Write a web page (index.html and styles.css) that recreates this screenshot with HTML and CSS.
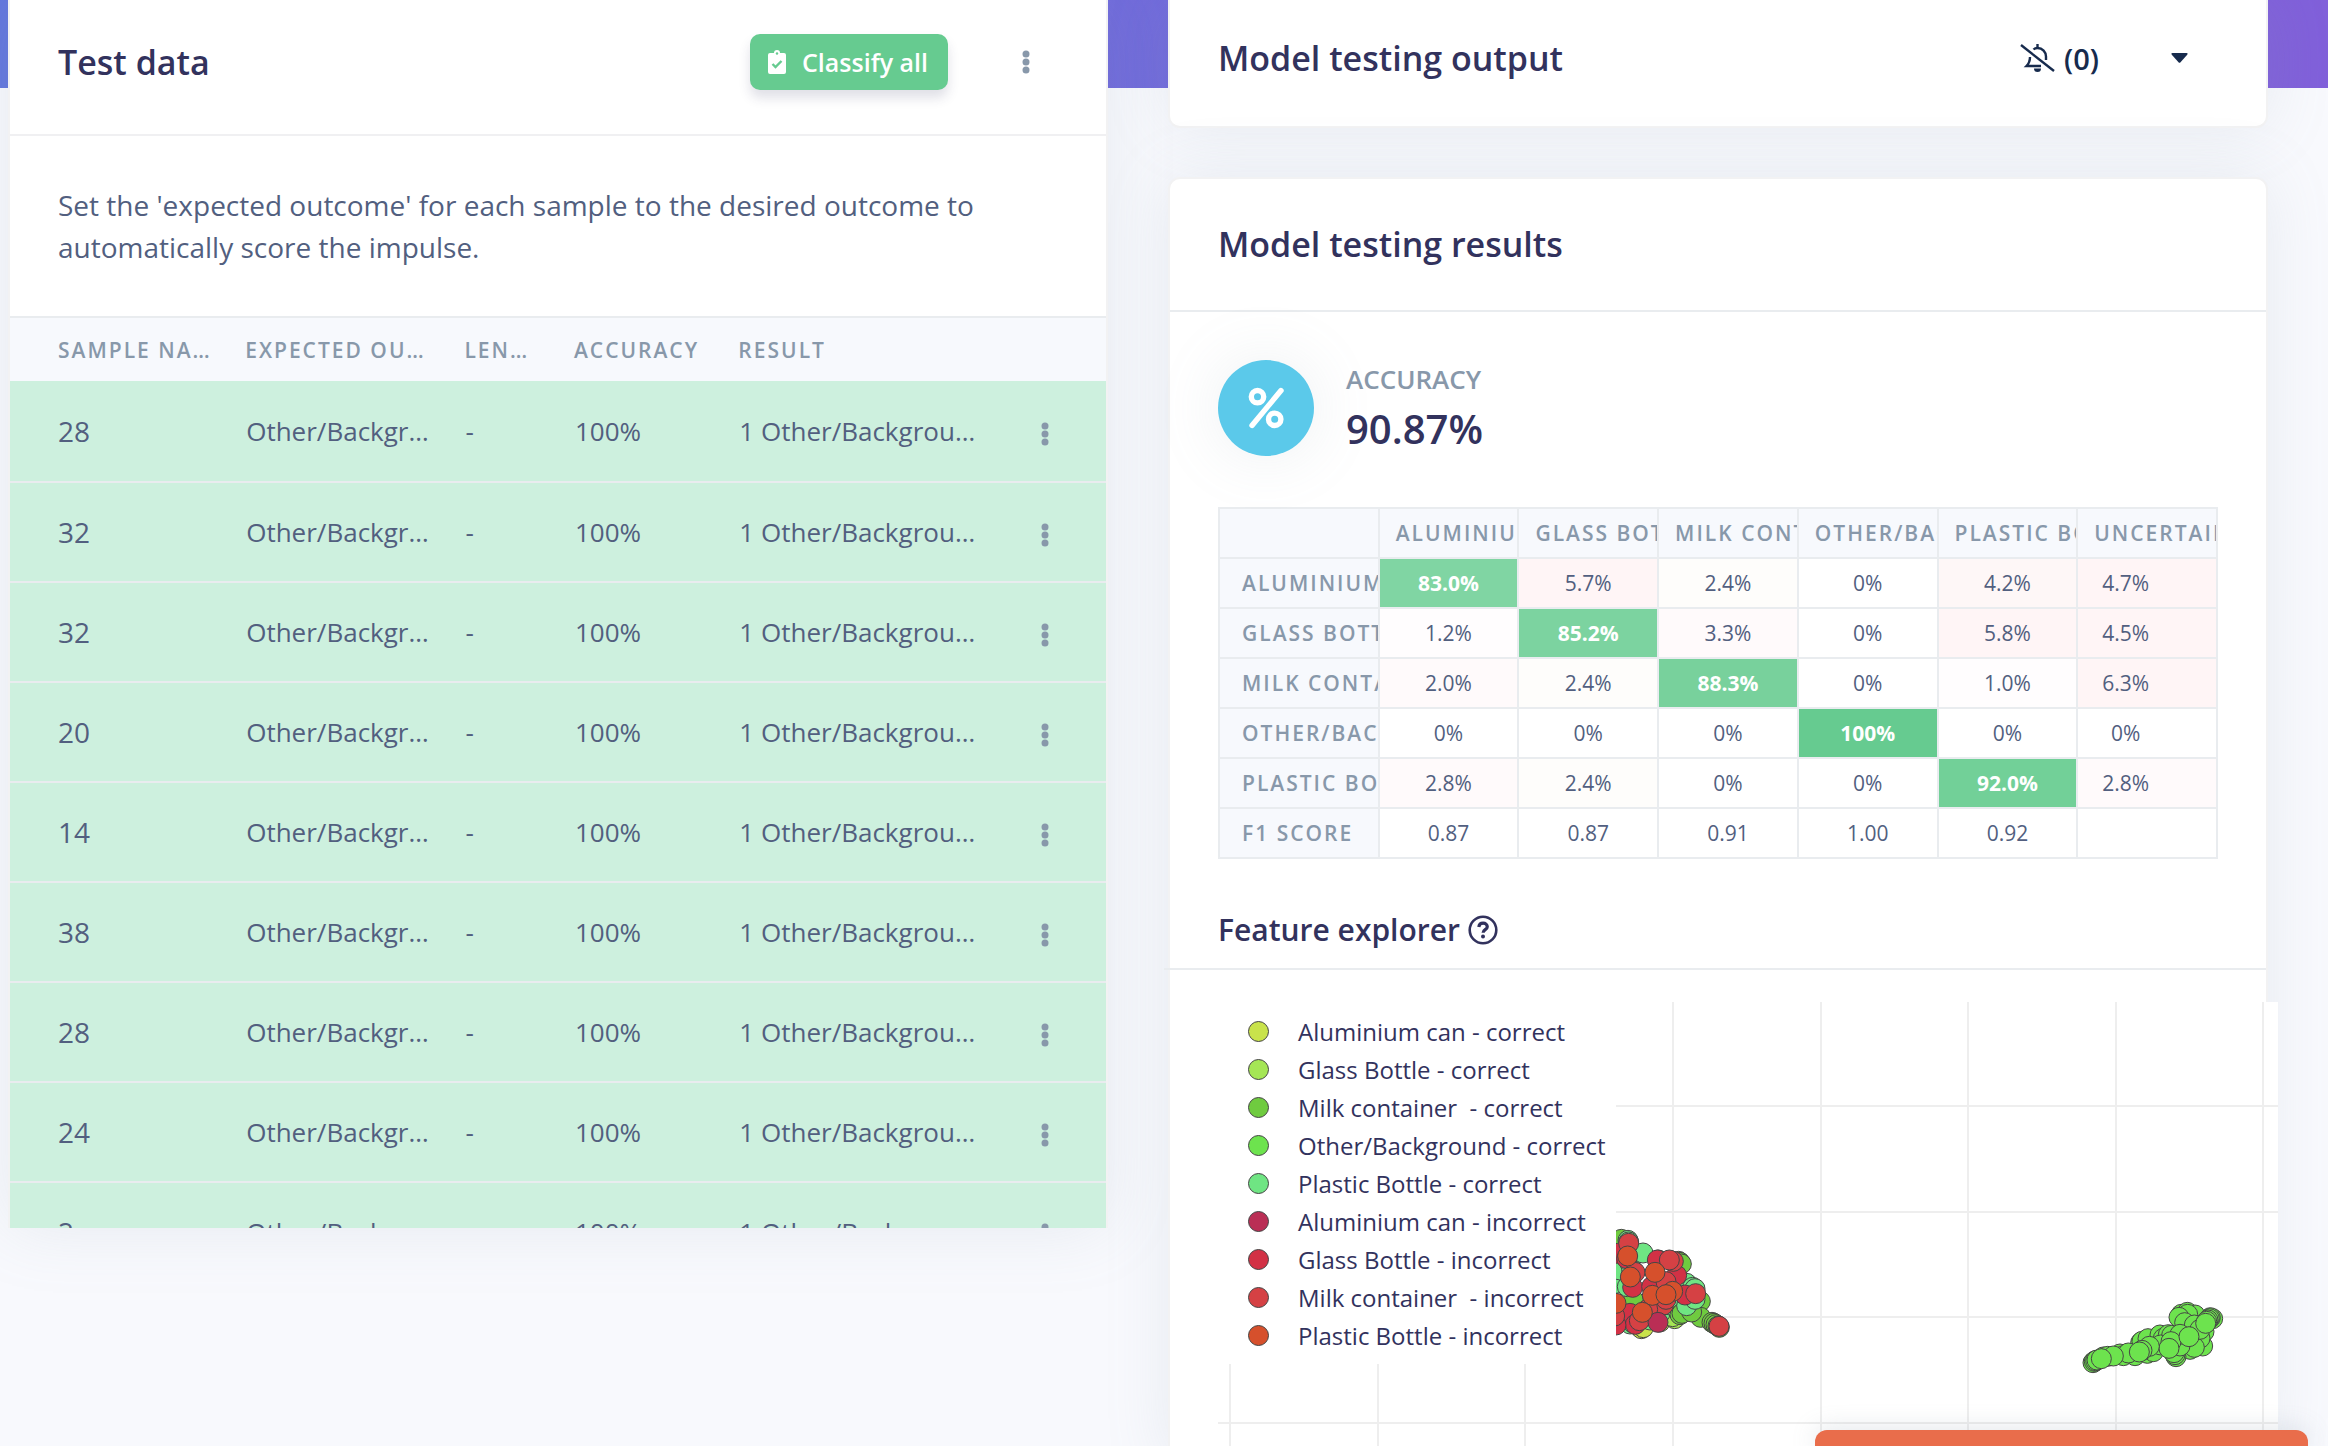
FILE: index.html
```html
<!DOCTYPE html>
<html lang="en">
<head>
<meta charset="utf-8">
<title>Model testing</title>
<link rel="stylesheet" href="styles.css">
</head>
<body>
<svg class="sprite" aria-hidden="true">
  <symbol id="dots" viewBox="0 0 8 24"><circle cx="4" cy="4" r="3.5"/><circle cx="4" cy="12" r="3.5"/><circle cx="4" cy="20" r="3.5"/></symbol>
</svg>
<main class="page">
  <section class="card card-data">
    <header class="card-header header-data">
      <h2 class="title">Test data</h2>
      <div class="actions">
        <button class="btn-classify" type="button">
          <svg class="icon-clipboard" viewBox="0 0 18 24" aria-hidden="true"><path fill="#fff" d="M2 3h4a3 3 0 0 1 6 0h4a2 2 0 0 1 2 2v17a2 2 0 0 1-2 2H2a2 2 0 0 1-2-2V5a2 2 0 0 1 2-2z"/><circle cx="9" cy="3.500" r="1.200" fill="#66cb90"/><path d="M4.500 14l3 3 6-6" fill="none" stroke="#66cb90" stroke-width="2.400"/></svg>
          Classify all
        </button>
        <button class="btn-dots" type="button" aria-label="More actions"><svg class="icon-dots"><use href="#dots"/></svg></button>
      </div>
    </header>
    <p class="intro">Set the 'expected outcome' for each sample to the desired outcome to automatically score the impulse.</p>
    <div class="table-wrap">
      <table class="samples">
        <colgroup><col class="c20"><col class="c20"><col class="c10"><col class="c15"><col class="c25"><col class="c10"></colgroup>
        <thead><tr><th>Sample name</th><th>Expected outcome</th><th>Length</th><th>Accuracy</th><th>Result</th><th></th></tr></thead>
        <tbody>
          <tr><td>28</td><td>Other/Background</td><td>-</td><td>100%</td><td>1 Other/Background</td><td><button class="btn-dots" type="button" aria-label="Sample actions"><svg class="icon-dots"><use href="#dots"/></svg></button></td></tr>
          <tr><td>32</td><td>Other/Background</td><td>-</td><td>100%</td><td>1 Other/Background</td><td><button class="btn-dots" type="button" aria-label="Sample actions"><svg class="icon-dots"><use href="#dots"/></svg></button></td></tr>
          <tr><td>32</td><td>Other/Background</td><td>-</td><td>100%</td><td>1 Other/Background</td><td><button class="btn-dots" type="button" aria-label="Sample actions"><svg class="icon-dots"><use href="#dots"/></svg></button></td></tr>
          <tr><td>20</td><td>Other/Background</td><td>-</td><td>100%</td><td>1 Other/Background</td><td><button class="btn-dots" type="button" aria-label="Sample actions"><svg class="icon-dots"><use href="#dots"/></svg></button></td></tr>
          <tr><td>14</td><td>Other/Background</td><td>-</td><td>100%</td><td>1 Other/Background</td><td><button class="btn-dots" type="button" aria-label="Sample actions"><svg class="icon-dots"><use href="#dots"/></svg></button></td></tr>
          <tr><td>38</td><td>Other/Background</td><td>-</td><td>100%</td><td>1 Other/Background</td><td><button class="btn-dots" type="button" aria-label="Sample actions"><svg class="icon-dots"><use href="#dots"/></svg></button></td></tr>
          <tr><td>28</td><td>Other/Background</td><td>-</td><td>100%</td><td>1 Other/Background</td><td><button class="btn-dots" type="button" aria-label="Sample actions"><svg class="icon-dots"><use href="#dots"/></svg></button></td></tr>
          <tr><td>24</td><td>Other/Background</td><td>-</td><td>100%</td><td>1 Other/Background</td><td><button class="btn-dots" type="button" aria-label="Sample actions"><svg class="icon-dots"><use href="#dots"/></svg></button></td></tr>
          <tr><td>2</td><td>Other/Background</td><td>-</td><td>100%</td><td>1 Other/Background</td><td><button class="btn-dots" type="button" aria-label="Sample actions"><svg class="icon-dots"><use href="#dots"/></svg></button></td></tr>
        </tbody>
      </table>
    </div>
  </section>

  <div class="column">
    <section class="card card-output">
      <header class="card-header header-output">
        <h2 class="title">Model testing output</h2>
        <div class="output-tools">
          <button class="btn-notify" type="button" aria-label="Notifications off">
            <svg class="icon-bell" viewBox="0 0 36 28" fill="none" stroke="#172b4d" stroke-width="2.400" aria-hidden="true"><path d="M1 1l33 26"/><path d="M13.500 5.500C14.500 4.500 16 4 17.500 4c5 0 8.500 4 8.500 8.500v3.500"/><path d="M17.500 0v4"/><path d="M10 13c0 4-.500 6-3.500 9H21"/><path d="M14 24.500h7a3.500 3.500 0 0 1-7 0z" fill="#172b4d" stroke="none"/></svg>
            (0)
          </button>
          <button class="btn-caret" type="button" aria-label="Expand"><svg class="icon-caret" viewBox="0 0 16 10" aria-hidden="true"><path d="M1 0h14q2 0 .500 2L9 9.300q-1 1-2 0L.500 2Q-1 0 1 0z" fill="#172b4d"/></svg></button>
        </div>
      </header>
    </section>

    <section class="card card-results">
      <header class="card-header header-results"><h2 class="title">Model testing results</h2></header>
      <div class="results">
        <div class="stat">
          <span class="stat-icon"><svg class="icon-percent" viewBox="0 0 36 42" fill="none" stroke="#fff" stroke-width="5.400" stroke-linecap="round" aria-hidden="true"><path d="M33 3.500L4 38.500"/><circle cx="9.500" cy="9.700" r="6.200"/><circle cx="26.700" cy="32.300" r="6.200"/></svg></span>
          <div class="stat-text"><span class="stat-label">ACCURACY</span><span class="stat-value">90.87%</span></div>
        </div>
        <table class="matrix">
          <colgroup><col class="m-head"><col span="6"></colgroup>
          <thead><tr><th></th><th>Aluminium can</th><th>Glass Bottle</th><th>Milk container</th><th>Other/Background</th><th>Plastic Bottle</th><th>Uncertain</th></tr></thead>
          <tbody>
            <tr><th>Aluminium can</th><td class="hit h83">83.0%</td><td class="e4">5.7%</td><td class="e1">2.4%</td><td>0%</td><td class="e3">4.2%</td><td class="e4">4.7%</td></tr>
            <tr><th>Glass Bottle</th><td class="e0">1.2%</td><td class="hit h85">85.2%</td><td class="e2">3.3%</td><td>0%</td><td class="e4">5.8%</td><td class="e4">4.5%</td></tr>
            <tr><th>Milk container</th><td class="e2">2.0%</td><td class="e1">2.4%</td><td class="hit h88">88.3%</td><td>0%</td><td class="e0">1.0%</td><td class="e4">6.3%</td></tr>
            <tr><th>Other/Background</th><td>0%</td><td>0%</td><td>0%</td><td class="hit h100">100%</td><td>0%</td><td>0%</td></tr>
            <tr><th>Plastic Bottle</th><td class="e2">2.8%</td><td class="e1">2.4%</td><td>0%</td><td>0%</td><td class="hit h92">92.0%</td><td class="e2">2.8%</td></tr>
            <tr><th>F1 score</th><td>0.87</td><td>0.87</td><td>0.91</td><td>1.00</td><td>0.92</td><td></td></tr>
          </tbody>
        </table>

        <div class="explorer-header">
          <h3 class="subtitle">Feature explorer</h3>
          <svg class="icon-help" viewBox="0 0 30 30" fill="none" stroke="#32325d" aria-hidden="true"><circle cx="15" cy="15" r="13.300" stroke-width="2.600"/><path d="M10.800 12c.3-2.500 2-3.800 4.300-3.800 2.400 0 4.200 1.400 4.200 3.500 0 3-4.200 2.900-4.200 6" stroke-width="3.200"/><circle cx="15" cy="21.500" r="2" fill="#32325d" stroke="none"/></svg>
        </div>

        <div class="plot">
          <svg class="plot-canvas" viewBox="0 0 1060 460" aria-label="Feature explorer scatter plot">
            <rect width="1060" height="460" fill="#fff"/>
            <path d="M12 0v460M160 0v460M307 0v460M455 0v460M603 0v460M750 0v460M898 0v460M1045 0v460M0 104h1060M0 210h1060M0 315h1060M0 421h1060" stroke="#eee" stroke-width="2" fill="none"/>
            <g class="pts" transform="translate(362 188) scale(.33333)">
              <g fill="#6fcb3f"><circle cx="124" cy="148" r="30"/><circle cx="235" cy="210" r="30"/><circle cx="296" cy="214" r="30"/><circle cx="300" cy="217" r="30"/><circle cx="304" cy="222" r="30"/><circle cx="160" cy="330" r="30"/><circle cx="361" cy="334" r="30"/><circle cx="362" cy="382" r="30"/><circle cx="396" cy="397" r="30"/><circle cx="402" cy="400" r="30"/><circle cx="408" cy="404" r="30"/></g>
              <g fill="#6fe583"><circle cx="108" cy="280" r="30"/><circle cx="120" cy="240" r="30"/><circle cx="150" cy="220" r="30"/><circle cx="144" cy="151" r="30"/><circle cx="146" cy="156" r="30"/><circle cx="189" cy="189" r="30"/><circle cx="155" cy="240" r="30"/><circle cx="142" cy="290" r="30"/><circle cx="250" cy="310" r="30"/><circle cx="320" cy="280" r="30"/></g>
              <g fill="#c9e34b"><circle cx="179" cy="411" r="30"/><circle cx="184" cy="416" r="30"/><circle cx="190" cy="413" r="30"/><circle cx="240" cy="396" r="30"/></g>
              <g fill="#a5e655"><circle cx="284" cy="386" r="30"/><circle cx="278" cy="380" r="30"/></g>
              <g fill="#6fe583"><circle cx="125" cy="390" r="30"/><circle cx="150" cy="402" r="30"/><circle cx="160" cy="400" r="30"/><circle cx="210" cy="390" r="30"/><circle cx="240" cy="370" r="30"/><circle cx="270" cy="345" r="30"/></g>
              <g fill="#6fcb3f"><circle cx="300" cy="374" r="30"/><circle cx="306" cy="370" r="30"/><circle cx="335" cy="366" r="30"/></g>
              <g fill="#6fe583"><circle cx="320" cy="347" r="30"/><circle cx="345" cy="328" r="30"/><circle cx="342" cy="298" r="30"/><circle cx="338" cy="292" r="30"/><circle cx="345" cy="296" r="30"/></g>
              <g fill="#d23145"><circle cx="112" cy="190" r="30"/><circle cx="140" cy="206" r="30"/><circle cx="158" cy="292" r="30"/><circle cx="232" cy="210" r="30"/><circle cx="215" cy="290" r="30"/><circle cx="290" cy="256" r="30"/><circle cx="315" cy="315" r="30"/><circle cx="150" cy="370" r="30"/><circle cx="166" cy="403" r="30"/><circle cx="108" cy="405" r="30"/><circle cx="240" cy="340" r="30"/></g>
              <g fill="#d54144"><circle cx="146" cy="160" r="30"/><circle cx="165" cy="247" r="30"/><circle cx="280" cy="214" r="30"/><circle cx="268" cy="210" r="30"/><circle cx="258" cy="275" r="30"/><circle cx="250" cy="345" r="30"/><circle cx="258" cy="328" r="30"/><circle cx="203" cy="358" r="30"/><circle cx="178" cy="392" r="30"/><circle cx="104" cy="378" r="30"/><circle cx="347" cy="311" r="30"/></g>
              <circle cx="234" cy="397" r="30" fill="#ba2e55"/>
              <g fill="#d6502c"><circle cx="143" cy="198" r="30"/><circle cx="151" cy="261" r="30"/><circle cx="225" cy="247" r="30"/><circle cx="217" cy="316" r="30"/><circle cx="278" cy="304" r="30"/><circle cx="258" cy="314" r="30"/><circle cx="108" cy="340" r="30"/><circle cx="187" cy="367" r="30"/></g>
              <g fill="#6fcb3f"><circle cx="414" cy="408" r="30"/><circle cx="418" cy="412" r="30"/></g>
              <circle cx="417" cy="409" r="30" fill="#d54144"/>
            </g>
            <g class="pts" fill="#6de34e" transform="translate(822 268) scale(.33333)">
              <circle cx="159" cy="278" r="30"/><circle cx="163" cy="274" r="30"/><circle cx="167" cy="272" r="30"/><circle cx="171" cy="270" r="30"/><circle cx="190" cy="261" r="30"/><circle cx="203" cy="259" r="30"/><circle cx="240" cy="252" r="30"/><circle cx="250" cy="257" r="30"/><circle cx="285" cy="257" r="30"/><circle cx="302" cy="218" r="30"/><circle cx="306" cy="214" r="30"/><circle cx="322" cy="250" r="30"/><circle cx="324" cy="206" r="30"/><circle cx="360" cy="195" r="30"/><circle cx="370" cy="205" r="30"/><circle cx="340" cy="245" r="30"/><circle cx="385" cy="194" r="30"/><circle cx="395" cy="196" r="30"/>
              <circle cx="424" cy="133" r="30"/><circle cx="442" cy="127" r="30"/><circle cx="465" cy="135" r="30"/><circle cx="443" cy="133" r="30"/><circle cx="417" cy="142" r="30"/><circle cx="434" cy="158" r="30"/><circle cx="463" cy="165" r="30"/><circle cx="492" cy="185" r="30"/><circle cx="488" cy="228" r="30"/><circle cx="480" cy="205" r="30"/><circle cx="450" cy="238" r="30"/><circle cx="463" cy="232" r="30"/><circle cx="408" cy="260" r="30"/><circle cx="405" cy="254" r="30"/><circle cx="402" cy="248" r="30"/><circle cx="480" cy="178" r="30"/>
              <circle cx="518" cy="146" r="30"/><circle cx="511" cy="143" r="30"/><circle cx="508" cy="146" r="30"/><circle cx="504" cy="150" r="30"/><circle cx="500" cy="154" r="30"/><circle cx="497" cy="160" r="30"/><circle cx="420" cy="228" r="30"/><circle cx="420" cy="193" r="30"/><circle cx="362" cy="225" r="30"/><circle cx="393" cy="215" r="30"/><circle cx="387" cy="235" r="30"/><circle cx="447" cy="200" r="30"/><circle cx="328" cy="229" r="30"/><circle cx="265" cy="249" r="30"/><circle cx="306" cy="241" r="30"/><circle cx="298" cy="246" r="30"/><circle cx="220" cy="258" r="30"/><circle cx="184" cy="266" r="30"/>
            </g>
          </svg>
          <ul class="legend">
            <li><span class="dot d1"></span>Aluminium can - correct</li>
            <li><span class="dot d2"></span>Glass Bottle - correct</li>
            <li><span class="dot d3"></span>Milk container  - correct</li>
            <li><span class="dot d4"></span>Other/Background - correct</li>
            <li><span class="dot d5"></span>Plastic Bottle - correct</li>
            <li><span class="dot d6"></span>Aluminium can - incorrect</li>
            <li><span class="dot d7"></span>Glass Bottle - incorrect</li>
            <li><span class="dot d8"></span>Milk container  - incorrect</li>
            <li><span class="dot d9"></span>Plastic Bottle - incorrect</li>
          </ul>
        </div>
      </div>
    </section>
  </div>
</main>
<div class="toast" role="status"></div>
</body>
</html>
```
FILE: styles.css
```css
* { box-sizing: border-box; }

body {
  margin: 0;
  background: #f8f9fd;
  color: #525f7f;
  font-family: "Open Sans", "Noto Sans", sans-serif;
  font-size: 26px;
}

h2, h3, p, ul { margin: 0; padding: 0; }

button {
  font: inherit;
  border: 0;
  padding: 0;
  background: none;
  cursor: pointer;
}

.sprite { position: absolute; width: 0; height: 0; }

.page {
  display: grid;
  grid-template-columns: minmax(0, 1fr) minmax(0, 1fr);
  gap: 60px;
  align-items: start;
  height: 100vh;
  overflow: hidden;
  padding: 0 60px 0 8px;
  background: linear-gradient(87deg, #6276dd, #8160da) 0 0 / 100% 88px no-repeat;
}

.column {
  display: flex;
  flex-direction: column;
  gap: 49px;
}

.card {
  background: #fff;
  border: 2px solid #f2f2f3;
  border-radius: 12px;
  box-shadow: 0 0 64px rgba(136, 152, 170, .15);
}

.card-data {
  border-top: 0;
  border-bottom: 0;
  border-radius: 0;
}

.card-output {
  border-top: 0;
  border-radius: 0 0 12px 12px;
}

.card-header {
  display: flex;
  align-items: center;
  justify-content: space-between;
}

.header-data {
  padding: 34px 48px 44px;
  border-bottom: 2px solid #f0f0f2;
}

.header-output { padding: 33px 48px 43px; }

.header-results {
  padding: 40px 48px 41px;
  border-bottom: 2px solid #e9ecef;
}

.title {
  color: #32325d;
  font-size: 34px;
  font-weight: 600;
  line-height: 50px;
}

.actions {
  display: flex;
  align-items: center;
  gap: 65px;
  padding-right: 19px;
}

.btn-classify {
  display: flex;
  align-items: center;
  gap: 16px;
  height: 56px;
  padding: 0 20px 0 18px;
  border-radius: 10px;
  background: #66cb90;
  color: #fff;
  font-size: 25px;
  font-weight: 600;
  box-shadow: 0 8px 12px rgba(50, 50, 93, .15);
}

.icon-clipboard { width: 18px; height: 24px; }

.btn-dots {
  display: inline-flex;
  justify-content: center;
  align-items: center;
  width: 26px;
  height: 32px;
  vertical-align: middle;
}

.icon-dots {
  width: 8px;
  height: 24px;
  fill: #8898aa;
}

.intro {
  padding: 48px;
  font-size: 28px;
  line-height: 42px;
}

.table-wrap {
  max-height: 912px;
  overflow: hidden;
}

table { border-collapse: collapse; table-layout: fixed; width: 100%; }

.samples { border-collapse: separate; border-spacing: 0; }
.c10 { width: 10%; }
.c15 { width: 15%; }
.c20 { width: 20%; }
.c25 { width: 25%; }

.samples th, .samples td {
  padding: 0 16px;
  text-align: left;
  white-space: nowrap;
  overflow: hidden;
  text-overflow: ellipsis;
}

.samples td { padding: 0 16px 0 17px; }
.samples th:first-child, .samples td:first-child { padding-left: 48px; }
.samples td:first-child { font-size: 28px; }
.samples td:last-child { padding-right: 48px; text-align: right; }

th {
  background: #f7f9fd;
  color: #8898aa;
  font-size: 21px;
  font-weight: 600;
  letter-spacing: 2px;
  text-transform: uppercase;
}

.samples th {
  height: 65px;
  border-top: 2px solid #e9ecef;
}

.samples td {
  height: 100px;
  background: #cdf0de;
  border-top: 2px solid #e9ecef;
}

.samples tbody tr:first-child td { border-top: 0; }

.output-tools {
  display: flex;
  align-items: center;
  gap: 72px;
  padding-right: 30px;
}

.btn-notify {
  display: flex;
  align-items: center;
  gap: 8px;
  color: #172b4d;
  font-size: 29px;
  font-weight: 600;
}

.icon-bell { width: 36px; height: 28px; }
.btn-caret { display: flex; }
.icon-caret { width: 17px; height: 10px; }

.results { padding: 48px 48px 0; }

.stat {
  display: flex;
  align-items: center;
  gap: 32px;
}

.stat-icon {
  display: flex;
  align-items: center;
  justify-content: center;
  width: 96px;
  height: 96px;
  border-radius: 50%;
  background: #5bc9ea;
  box-shadow: 0 0 64px rgba(136, 152, 170, .15);
}

.icon-percent { width: 36px; height: 42px; }

.stat-text {
  display: flex;
  flex-direction: column;
  gap: 5px;
}

.stat-label {
  color: #8898aa;
  font-size: 26px;
  font-weight: 600;
  line-height: 36px;
}

.stat-value {
  color: #32325d;
  font-size: 40px;
  font-weight: 600;
  line-height: 54px;
}

.matrix { margin-top: 51px; }
.m-head { width: 16%; }

.matrix th, .matrix td {
  height: 50px;
  padding: 0;
  border: 2px solid #e9ecef;
  text-align: center;
  font-size: 21px;
}

.matrix th {
  padding-left: 16px;
  text-align: left;
  white-space: nowrap;
  overflow: hidden;
}

.matrix tbody th { padding-left: 22px; }
.matrix td:last-child { padding-right: 43px; }
.matrix .hit { color: #fff; font-weight: 700; }
.h83 { background: #80d5a3; }
.h85 { background: #7cd3a0; }
.h88 { background: #78d19c; }
.h92 { background: #72d098; }
.h100 { background: #66cb90; }
.e0 { background: #fffdfe; }
.e1 { background: #fefdfb; }
.e2 { background: #fffafb; }
.e3 { background: #fef7f7; }
.e4 { background: #fff5f6; }

.explorer-header {
  display: flex;
  align-items: center;
  gap: 8px;
  margin: 49px -48px 0 -54px;
  padding: 0 48px 16px 54px;
  border-bottom: 2px solid #e9ecef;
}

.subtitle {
  color: #32325d;
  font-size: 30px;
  font-weight: 600;
  line-height: 44px;
}

.icon-help { width: 30px; height: 30px; }

.plot {
  position: relative;
  margin: 32px -60px 0 0;
}

.plot-canvas { display: block; width: 100%; height: auto; }
.pts circle { stroke: #444; stroke-width: 3; }

.legend {
  position: absolute;
  top: 0;
  left: 0;
  width: 398px;
  padding: 10px 0 10px 30px;
  background: #fff;
  list-style: none;
}

.legend li {
  display: flex;
  align-items: center;
  gap: 29px;
  height: 38px;
  color: #32325d;
  font-size: 24px;
  white-space: pre;
}

.dot {
  width: 21px;
  height: 21px;
  border: 1px solid #444;
  border-radius: 50%;
}

.d1 { background: #c9e34b; }
.d2 { background: #a5e655; }
.d3 { background: #6fcb3f; }
.d4 { background: #6de34e; }
.d5 { background: #6fe583; }
.d6 { background: #ba2e55; }
.d7 { background: #d23145; }
.d8 { background: #d54144; }
.d9 { background: #d6502c; }

.toast {
  position: fixed;
  right: 20px;
  bottom: 0;
  width: 493px;
  height: 16px;
  border-radius: 12px 12px 0 0;
  background: #e96d4b;
  box-shadow: 0 0 24px rgba(136, 152, 170, .3);
}
```
